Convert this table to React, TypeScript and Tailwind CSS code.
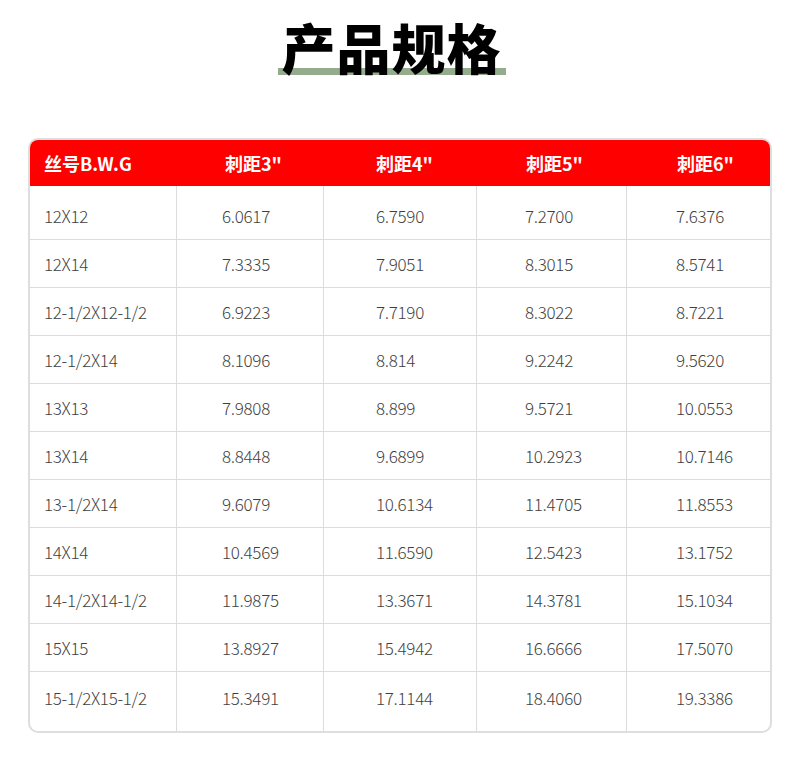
const headers = ["丝号B.W.G", '刺距3"', '刺距4"', '刺距5"', '刺距6"'];

const rows: string[][] = [
  ["12X12", "6.0617", "6.7590", "7.2700", "7.6376"],
  ["12X14", "7.3335", "7.9051", "8.3015", "8.5741"],
  ["12-1/2X12-1/2", "6.9223", "7.7190", "8.3022", "8.7221"],
  ["12-1/2X14", "8.1096", "8.814", "9.2242", "9.5620"],
  ["13X13", "7.9808", "8.899", "9.5721", "10.0553"],
  ["13X14", "8.8448", "9.6899", "10.2923", "10.7146"],
  ["13-1/2X14", "9.6079", "10.6134", "11.4705", "11.8553"],
  ["14X14", "10.4569", "11.6590", "12.5423", "13.1752"],
  ["14-1/2X14-1/2", "11.9875", "13.3671", "14.3781", "15.1034"],
  ["15X15", "13.8927", "15.4942", "16.6666", "17.5070"],
  ["15-1/2X15-1/2", "15.3491", "17.1144", "18.4060", "19.3386"],
];

const headPad = ["pl-[14px]", "pl-[49px]", "pl-[53px]", "pl-[50px]", "pl-[51px]"];
const cellPad = ["pl-[14px]", "pl-[45px]", "pl-[52px]", "pl-[48px]", "pl-[49px]"];
const cols = "grid grid-cols-[146px_147px_153px_150px_144px]";

export default function App() {
  return (
    <div className="bg-white w-[801px] h-[768px] font-['Noto_Sans_CJK_SC','Noto_Sans',sans-serif]">
      <div className="flex justify-center pr-[18px] pt-[10px]">
        <h1 className="relative px-[4px] text-[54px] leading-[74px] font-black text-black tracking-[1px]">
          <span className="absolute left-0 right-0 top-[58px] h-[7px] bg-[#95ab8e]" />
          <span className="relative">产品规格</span>
        </h1>
      </div>

      <div className="ml-[28px] mt-[54px] w-[744px] rounded-[10px] border-2 border-[#dedede] overflow-hidden">
        <div className={`${cols} h-[46px] items-center bg-[#ff0000] text-white text-[18px] font-bold`}>
          {headers.map((h, i) => (
            <div key={h} className={headPad[i]}>
              {h}
            </div>
          ))}
        </div>
        {rows.map((r, ri) => {
          const first = ri === 0;
          const last = ri === rows.length - 1;
          return (
            <div
              key={r[0]}
              className={`${cols} text-[17px] text-[#3f3f3f] font-light tracking-[-0.3px] ${last ? "" : "border-b border-[#dcdcdc]"}`}
            >
              {r.map((c, ci) => (
                <div
                  key={ci}
                  className={`flex items-center ${cellPad[ci]} ${ci > 0 ? "border-l border-[#dcdcdc]" : ""} ${first ? "h-[53px] pt-[7px]" : last ? "h-[59px] pb-[8px]" : "h-[47px] pt-[1px]"}`}
                >
                  {c}
                </div>
              ))}
            </div>
          );
        })}
      </div>
    </div>
  );
}
